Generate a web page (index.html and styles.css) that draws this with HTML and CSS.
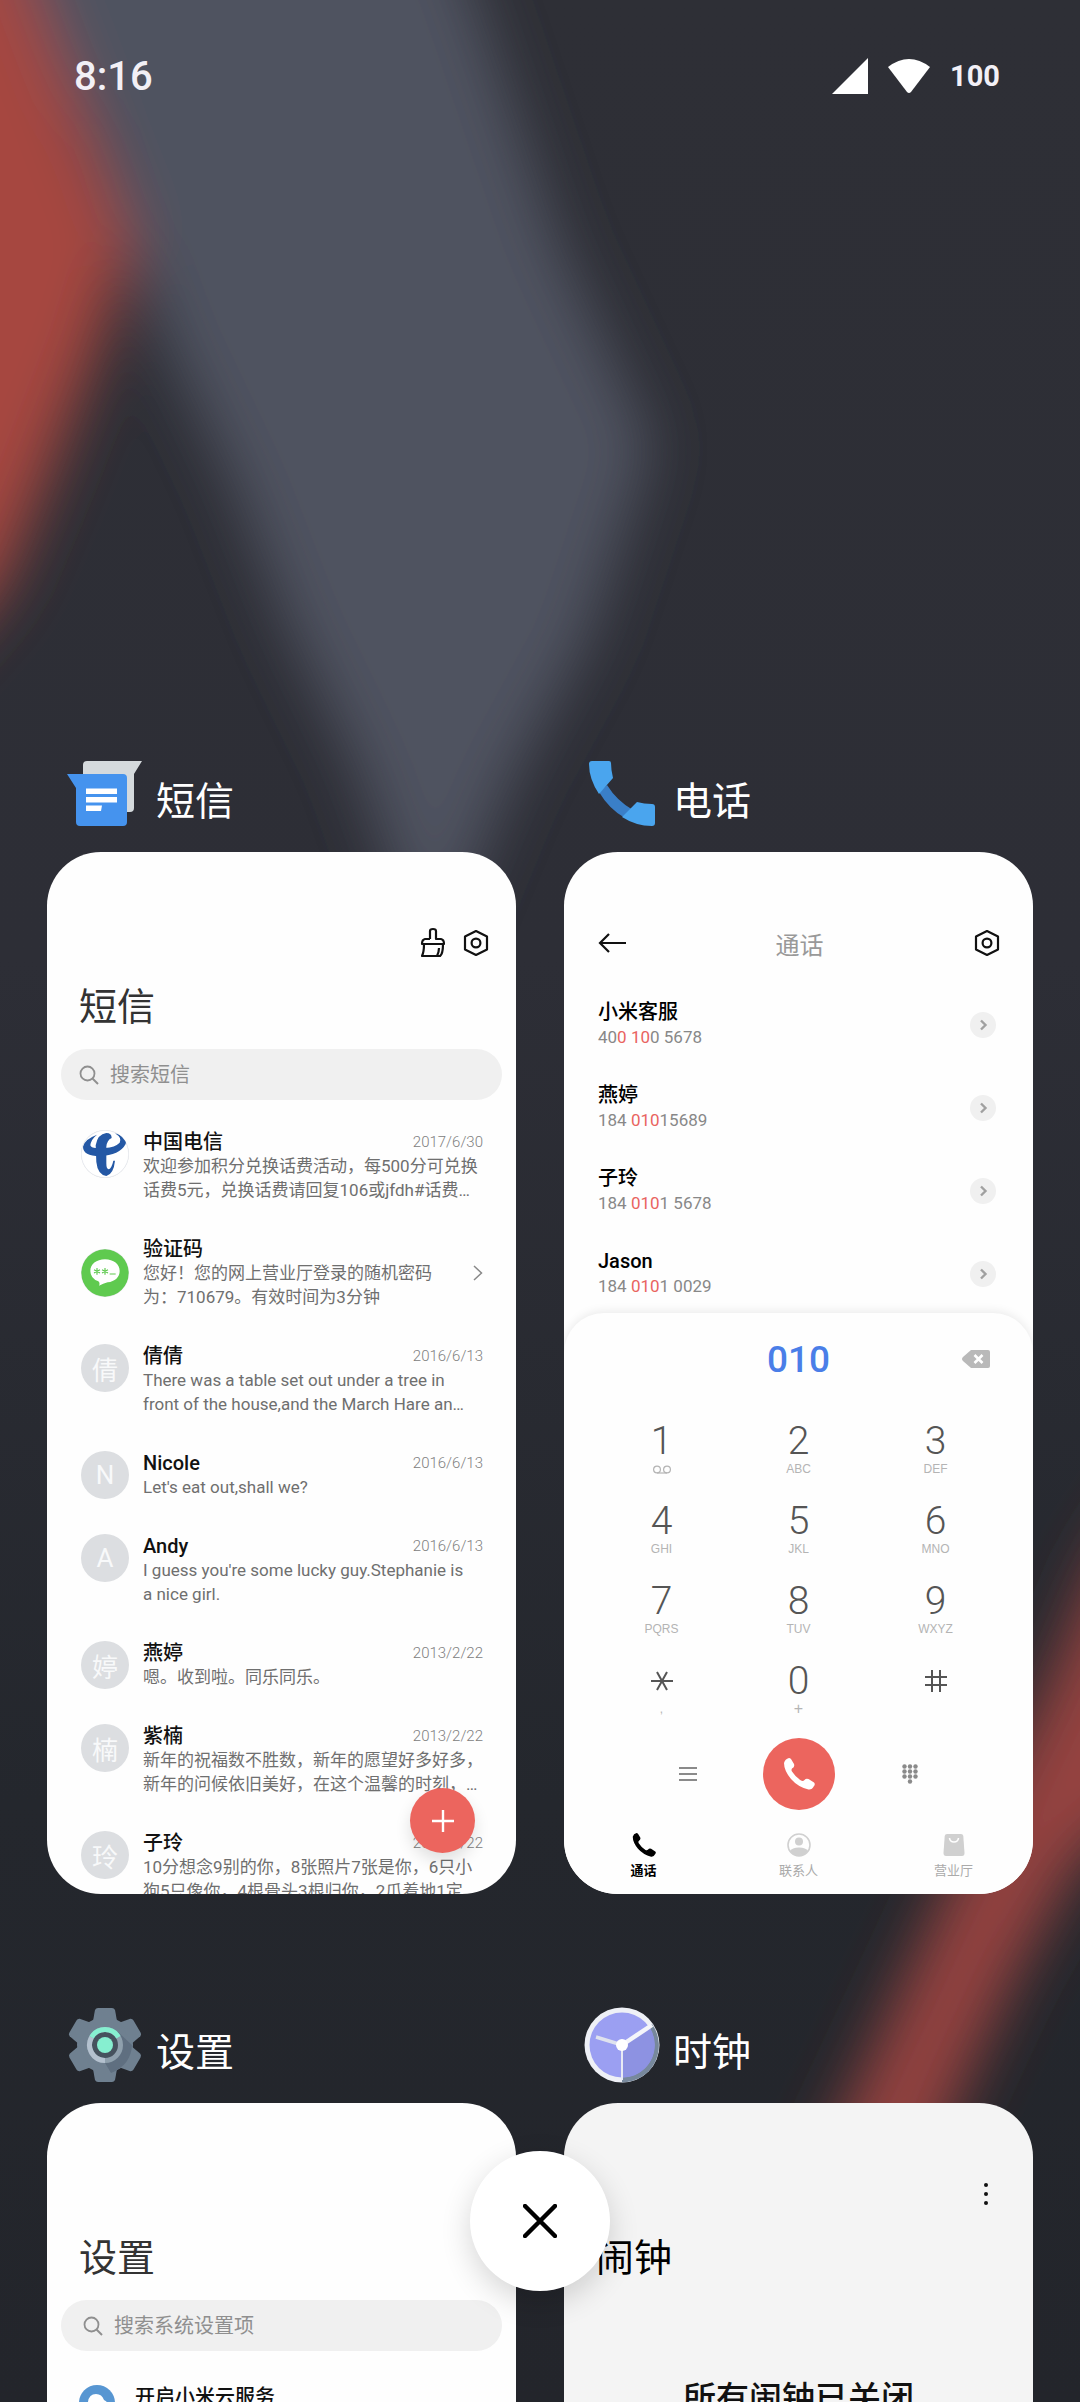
FILE: index.html
```html
<!DOCTYPE html>
<html lang="zh-CN">
<head>
<meta charset="utf-8">
<meta name="viewport" content="width=device-width, initial-scale=1">
<title>最近任务</title>
<link rel="stylesheet" href="styles.css">
</head>
<body>
<svg width="0" height="0" class="defs" aria-hidden="true">
  <symbol id="hex" viewBox="0 0 28 28"><path d="M14 2 L25 7.5 V20.5 L14 26 L3 20.5 V7.5 Z" fill="none" stroke="#111" stroke-width="2.2" stroke-linejoin="round"/><circle cx="14" cy="14" r="4.4" fill="none" stroke="#111" stroke-width="2.2"/></symbol>
  <symbol id="search" viewBox="0 0 20 20"><circle cx="8.5" cy="8.5" r="7" fill="none" stroke="#8f8f8f" stroke-width="1.8"/><path d="M13.5 13.5 L19 19" stroke="#8f8f8f" stroke-width="2"/></symbol>
  <symbol id="go" viewBox="0 0 26 26"><circle cx="13" cy="13" r="13" fill="#f0f0f0"/><path d="M11 8.5 L15.5 13 L11 17.5" fill="none" stroke="#a0a0a0" stroke-width="2.4"/></symbol>
  <symbol id="handset" viewBox="0 0 32 32"><path d="M1 5 Q2 1 6 0 Q7 0 8 1 L11 6 Q12 9 9 10.5 Q8 12 9 13.5 Q12.5 19 18 22.5 Q20 23.5 21.5 22 Q23 20 25.5 21 L31 24.5 Q32.5 26 31 28 Q29 32 25.5 31.5 Q15 29 8 21 Q1 12.5 1 5 Z"/></symbol>
</svg>
<div class="screen">
  <svg class="wallpaper" viewBox="0 0 1080 2402" preserveAspectRatio="none" aria-hidden="true">
    <defs>
      <linearGradient id="base" x1="0" y1="0" x2="0" y2="1"><stop offset="0" stop-color="#2e2f36"/><stop offset=".4" stop-color="#2d2e36"/><stop offset=".75" stop-color="#24272d"/><stop offset="1" stop-color="#23252b"/></linearGradient>
      <filter id="soft" x="-50%" y="-50%" width="200%" height="200%"><feGaussianBlur stdDeviation="30"/></filter>
    </defs>
    <rect width="1080" height="2402" fill="url(#base)"/>
    <g filter="url(#soft)">
      <path d="M-60 -120 H430 L476 0 L558 242 L652 445 L588 640 L512 780 L430 980 L358 770 L290 630 L234 485 L165 340 L90 130 Z" fill="#4f5361"/>
      <path d="M-150 -100 H0 L34 0 L128 245 L100 340 L44 485 L0 590 L-150 760 Z" fill="#a64740"/>
      <path d="M1180 1440 L1100 1560 L1045 1690 L945 1893 L848 2103 L730 2350 L860 2350 L955 2103 L1012 1980 L1080 1860 L1180 1780 Z" fill="#944240"/>
    </g>
  </svg>

  <header class="status">
    <span class="clock">8:16</span>
    <span class="signals">
      <svg width="36" height="36" viewBox="0 0 36 36" aria-hidden="true"><path d="M0 36 L36 0 V36 Z" fill="#fff"/></svg>
      <svg width="42" height="34" viewBox="0 0 42 34" aria-hidden="true"><path d="M0 8 Q21 -8 42 8 L23 33 Q21 35 19 33 Z" fill="#fff"/></svg>
      <span class="battery">100</span>
    </span>
  </header>

  <main class="recents">
    <section class="task">
      <h2 class="task-head">
        <svg width="76" height="76" viewBox="0 0 76 76" aria-hidden="true"><path d="M16 9 Q16 5 20 5 H75 L67 18 V52 Q67 56 63 56 H16 Z" fill="#d5dadd"/><path d="M0 18 H56 Q60 18 60 22 V66 Q60 70 56 70 H13 Q9 70 9 66 V32 Z" fill="#4593ee"/><path d="M19 32.5 H50 V38 H19 Z M19 41 H50 V46.5 H19 Z M19 49.5 H35 L34 55 H19 Z" fill="#fff"/></svg>
        <span>短信</span>
      </h2>
      <article class="card">
        <div class="bar bar-end">
          <button class="icon" aria-label="清理"><svg width="28" height="32" viewBox="0 0 28 32"><path d="M11 12 V4 Q11 2 14 2 Q17 2 17 4 V12 H22 Q25 12.5 25 17 H3 Q3 12.5 6 12 H11 M5 17 Q5 25 3 29 H21 Q24 27 24 17 M18 29 Q20 25 20 21" fill="none" stroke="#111" stroke-width="2.2" stroke-linejoin="round"/></svg></button>
          <button class="icon" aria-label="设置"><svg width="28" height="28"><use href="#hex"/></svg></button>
        </div>
        <h3 class="title">短信</h3>
        <label class="search"><svg width="20" height="20"><use href="#search"/></svg><input type="search" placeholder="搜索短信" aria-label="搜索短信"></label>
        <ul class="messages">
          <li class="message">
            <svg class="avatar" viewBox="0 0 144 144" aria-hidden="true"><circle cx="72" cy="72" r="71" fill="#fff" stroke="#e6e9ee" stroke-width="2"/><path d="M48 14 Q10 28 6 50 Q6 78 56 78 Q116 76 134 42 Q140 20 102 10 Q124 24 116 38 Q102 52 72 54 Q30 58 28 46 Q30 28 48 14 Z" fill="#2458a5"/><path d="M92 24 Q92 9 76 9 Q50 12 44 46 L46 96 Q50 134 76 138 Q98 132 102 92 H97 Q92 116 82 118 Q76 116 76 100 V50 Q78 30 92 24 Z" fill="#2458a5"/></svg>
            <div class="body"><div class="line"><h4>中国电信</h4><time>2017/6/30</time></div><p>欢迎参加积分兑换话费活动，每500分可兑换<br>话费5元，兑换话费请回复106或jfdh#话费…</p></div>
          </li>
          <li class="message center">
            <svg class="avatar" viewBox="0 0 144 144" aria-hidden="true"><circle cx="72" cy="72" r="71" fill="#5fca4f"/><path d="M72 31 C98 31 116 46 116 66 C116 84 102 98 80 100 Q66 104 54 110 Q58 102 52 97 Q28 88 28 66 C28 46 46 31 72 31 Z" fill="#fff"/><path d="M48 57 V77 M39 62 L57 72 M57 62 L39 72 M72 57 V77 M63 62 L81 72 M81 62 L63 72 M86 75 H104" stroke="#5fca4f" stroke-width="3.5"/></svg>
            <div class="body"><h4>验证码</h4><p>您好！您的网上营业厅登录的随机密码<br>为：710679。有效时间为3分钟</p></div>
            <svg class="more" width="10" height="16" viewBox="0 0 10 16" aria-hidden="true"><path d="M1 1 L8.5 8 L1 15" fill="none" stroke="#888" stroke-width="1.5"/></svg>
          </li>
          <li class="message"><span class="avatar">倩</span><div class="body"><div class="line"><h4>倩倩</h4><time>2016/6/13</time></div><p>There was a table set out under a tree in<br>front of the house,and the March Hare an…</p></div></li>
          <li class="message"><span class="avatar">N</span><div class="body"><div class="line"><h4>Nicole</h4><time>2016/6/13</time></div><p>Let's eat out,shall we?</p></div></li>
          <li class="message"><span class="avatar">A</span><div class="body"><div class="line"><h4>Andy</h4><time>2016/6/13</time></div><p>I guess you're some lucky guy.Stephanie is<br>a nice girl.</p></div></li>
          <li class="message"><span class="avatar">婷</span><div class="body"><div class="line"><h4>燕婷</h4><time>2013/2/22</time></div><p>嗯。收到啦。同乐同乐。</p></div></li>
          <li class="message"><span class="avatar">楠</span><div class="body"><div class="line"><h4>紫楠</h4><time>2013/2/22</time></div><p>新年的祝福数不胜数，新年的愿望好多好多，<br>新年的问候依旧美好，在这个温馨的时刻，…</p></div></li>
          <li class="message"><span class="avatar">玲</span><div class="body"><div class="line"><h4>子玲</h4><time>2013/2/22</time></div><p>10分想念9别的你，8张照片7张是你，6只小<br>狗5只像你，4根骨头3根归你，2爪着地1定</p></div></li>
        </ul>
        <button class="fab" aria-label="新建短信"><svg width="22" height="22" viewBox="0 0 22 22"><path d="M11 0 V22 M0 11 H22" stroke="#fff" stroke-width="2.4"/></svg></button>
      </article>
    </section>

    <section class="task">
      <h2 class="task-head">
        <svg width="76" height="76" viewBox="0 0 76 76" aria-hidden="true"><path d="M15 36 Q25 53 41 62 L49 54 Q33 45 23 29 Z" fill="#3a7fc8"/><path d="M5 8 Q5 5 8 5 H25 Q27 5 27 7 Q27 14 29 22 L15 38 Q5 23 5 8 Z M38 61 L53 46 Q60 48 68 48 Q71 48 71 51 V67 Q71 70 68 70 Q52 70 38 61 Z" fill="#4aa5ee"/></svg>
        <span>电话</span>
      </h2>
      <article class="card">
        <div class="bar bar-dial">
          <button class="icon" aria-label="返回"><svg width="28" height="20" viewBox="0 0 28 20"><path d="M28 10 H2 M11 1 L2 10 L11 19" fill="none" stroke="#111" stroke-width="2.2"/></svg></button>
          <h3>通话</h3>
          <button class="icon" aria-label="设置"><svg width="28" height="28"><use href="#hex"/></svg></button>
        </div>
        <ul class="contacts">
          <li><div><h4>小米客服</h4><p>40<mark>0 10</mark>0 5678</p></div><svg width="26" height="26"><use href="#go"/></svg></li>
          <li><div><h4>燕婷</h4><p>184 <mark>010</mark>15689</p></div><svg width="26" height="26"><use href="#go"/></svg></li>
          <li><div><h4>子玲</h4><p>184 <mark>010</mark>1 5678</p></div><svg width="26" height="26"><use href="#go"/></svg></li>
          <li><div><h4>Jason</h4><p>184 <mark>010</mark>1 0029</p></div><svg width="26" height="26"><use href="#go"/></svg></li>
        </ul>
        <div class="sheet">
          <div class="entry">
            <output>010</output>
            <button class="icon" aria-label="删除"><svg width="28" height="20" viewBox="0 0 28 20"><path d="M9 1 H26 Q28 1 28 3 V17 Q28 19 26 19 H9 L1 12 Q-1 10 1 8 Z" fill="#b9b9b9"/><path d="M12.5 6 L20.5 14 M20.5 6 L12.5 14" stroke="#fff" stroke-width="2.6"/></svg></button>
          </div>
          <div class="keys">
            <button><b>1</b><small><svg width="18" height="9" viewBox="0 0 18 9" aria-hidden="true"><circle cx="4" cy="4.5" r="3.4" fill="none" stroke="#b4b4b4" stroke-width="1.2"/><circle cx="14" cy="4.5" r="3.4" fill="none" stroke="#b4b4b4" stroke-width="1.2"/><path d="M4 8 H14" stroke="#b4b4b4" stroke-width="1.2"/></svg></small></button>
            <button><b>2</b><small>ABC</small></button>
            <button><b>3</b><small>DEF</small></button>
            <button><b>4</b><small>GHI</small></button>
            <button><b>5</b><small>JKL</small></button>
            <button><b>6</b><small>MNO</small></button>
            <button><b>7</b><small>PQRS</small></button>
            <button><b>8</b><small>TUV</small></button>
            <button><b>9</b><small>WXYZ</small></button>
            <button aria-label="星号"><b><svg width="22" height="20" viewBox="0 0 22 20"><path d="M0 10 H22 M6 1 L16 19 M16 1 L6 19" stroke="#555" stroke-width="2"/></svg></b><small>,</small></button>
            <button><b>0</b><small class="plus">+</small></button>
            <button aria-label="井号"><b><svg width="22" height="22" viewBox="0 0 22 22"><path d="M0 7 H22 M0 15 H22 M7 0 V22 M15 0 V22" stroke="#555" stroke-width="2"/></svg></b><small></small></button>
          </div>
          <div class="actions">
            <button class="icon" aria-label="菜单"><svg width="18" height="16" viewBox="0 0 18 16"><path d="M0 2 H18 M0 8 H18 M0 14 H18" stroke="#8a8a8a" stroke-width="2.2"/></svg></button>
            <button class="call" aria-label="呼叫"><svg width="32" height="32" fill="#fff"><use href="#handset"/></svg></button>
            <button class="icon" aria-label="拨号盘"><svg width="18" height="20" viewBox="0 0 18 20" fill="#8a8a8a"><circle cx="3.5" cy="2.5" r="2.2"/><circle cx="9" cy="2.5" r="2.2"/><circle cx="14.5" cy="2.5" r="2.2"/><circle cx="3.5" cy="7.5" r="2.2"/><circle cx="9" cy="7.5" r="2.2"/><circle cx="14.5" cy="7.5" r="2.2"/><circle cx="3.5" cy="12.5" r="2.2"/><circle cx="9" cy="12.5" r="2.2"/><circle cx="14.5" cy="12.5" r="2.2"/><circle cx="9" cy="17.5" r="2.2"/></svg></button>
          </div>
          <nav class="tabs">
            <a href="#calls" class="on"><svg width="24" height="24"><use href="#handset"/></svg>通话</a>
            <a href="#people"><svg width="24" height="24" viewBox="0 0 24 24"><circle cx="12" cy="12" r="11" fill="none" stroke="#d0d0d0" stroke-width="1.6"/><circle cx="12" cy="8.5" r="4" fill="#d0d0d0"/><path d="M3 18 Q5 14.5 12 14.5 Q19 14.5 21 18 Q17 23 12 23 Q7 23 3 18 Z" fill="#d0d0d0"/></svg>联系人</a>
            <a href="#store"><svg width="24" height="24" viewBox="0 0 24 24"><path d="M5 1 H19 Q21 1 21.3 3 L22.500 20 Q22.500 23 20 23 H4 Q1.500 23 1.500 20 L2.7 3 Q3 1 5 1 Z" fill="#d0d0d0"/><path d="M7.5 5 Q8 9 12 9 Q16 9 16.5 5" fill="none" stroke="#fff" stroke-width="1.6"/></svg>营业厅</a>
          </nav>
        </div>
      </article>
    </section>

    <section class="task">
      <h2 class="task-head">
        <svg width="76" height="76" viewBox="-38 -38 76 76" aria-hidden="true"><g fill="#6f8090"><circle r="28"/><path id="tooth" d="M-12 -24 L-10 -35 Q-9 -37 -7 -37 H7 Q9 -37 10 -35 L12 -24 Z"/><use href="#tooth" transform="rotate(60)"/><use href="#tooth" transform="rotate(120)"/><use href="#tooth" transform="rotate(180)"/><use href="#tooth" transform="rotate(240)"/><use href="#tooth" transform="rotate(300)"/></g><path d="M13 -13 L27 0 Q26 20 6 28 L0 18 Z" fill="#5f6f80"/><circle r="15.5" fill="#46525e" stroke="#8fa0ad" stroke-width="5"/><path d="M-13.4 -7.7 A15.5 15.5 0 0 0 0 15.5" fill="none" stroke="#b4c1cf" stroke-width="5"/><path d="M-13.4 -7.7 A15.5 15.5 0 0 1 13.4 -7.7" fill="none" stroke="#86efd0" stroke-width="5"/><circle r="8" fill="#86efd0"/></svg>
        <span>设置</span>
      </h2>
      <article class="card">
        <div class="bar"></div>
        <h3 class="title">设置</h3>
        <label class="search search-wide"><svg width="20" height="20"><use href="#search"/></svg><input type="search" placeholder="搜索系统设置项" aria-label="搜索系统设置项"></label>
        <ul class="settings">
          <li><svg width="36" height="36" viewBox="0 0 36 36" aria-hidden="true"><circle cx="18" cy="18" r="18" fill="#5796d2"/><path d="M9 25 Q5 21 9 17 Q10 9 17 9 Q23 9 25 15 Q30 17 28 22 Q27 25 24 25 Z" fill="#fff"/></svg>开启小米云服务</li>
        </ul>
      </article>
    </section>

    <section class="task">
      <h2 class="task-head">
        <svg width="76" height="76" viewBox="-38 -38 76 76" aria-hidden="true"><circle r="37.5" fill="#eef0f6"/><path d="M30 -21 A37 37 0 0 1 0 37.5 V0 Z" fill="#77889c"/><circle r="32.5" fill="#9b9ff2"/><path d="M0 0 L28 -17 A32.5 32.5 0 0 1 0 32.5 Z" fill="#8d92e2"/><path d="M0 0 L30 -20" stroke="#f4f5fa" stroke-width="4.5"/><path d="M0 0 L-26 -8" stroke="#dfe2ee" stroke-width="3.5"/><path d="M0 0 V35" stroke="#e8eaf4" stroke-width="2"/><circle r="6" fill="#fff"/></svg>
        <span>时钟</span>
      </h2>
      <article class="card card-grey">
        <div class="bar bar-end">
          <button class="icon" aria-label="更多"><svg width="28" height="24" viewBox="0 0 28 24" fill="#111"><circle cx="7" cy="3" r="2"/><circle cx="7" cy="12" r="2"/><circle cx="7" cy="21" r="2"/></svg></button>
        </div>
        <h3 class="title title-dark">闹钟</h3>
        <p class="alarm">所有闹钟已关闭</p>
      </article>
    </section>
  </main>

  <button class="close" aria-label="关闭全部"><svg width="34" height="34" viewBox="0 0 34 34"><path d="M2 2 L32 32 M32 2 L2 32" stroke="#000" stroke-width="4.5" stroke-linecap="round"/></svg></button>
</div>
</body>
</html>
```

FILE: styles.css
```css
* { box-sizing: border-box; margin: 0; padding: 0; }
body { font-family: Roboto, "Noto Sans CJK SC", sans-serif; color: #111; background: #24262c; }
button { border: 0; background: none; font: inherit; color: inherit; cursor: pointer; }
ul { list-style: none; }
svg { display: block; flex: none; }
.defs { position: absolute; }

.screen { position: relative; height: 100vh; overflow: hidden; }
.wallpaper { position: absolute; inset: 0; width: 100%; height: 100%; }

.status { position: relative; display: flex; align-items: center; justify-content: space-between; height: 152px; padding: 0 80px 0 74px; color: #f2f0f6; }
.clock { font-size: 40px; font-weight: 500; }
.signals { display: flex; align-items: center; gap: 20px; }
.battery { font-size: 29px; font-weight: 700; }

.recents { position: relative; display: grid; grid-template-columns: repeat(2, minmax(0, 1fr)); column-gap: 48px; row-gap: 113px; padding: 604px 47px 0; }
.task-head { display: flex; align-items: flex-end; gap: 13px; height: 96px; padding: 0 20px 20px; color: #fff; font-size: 39px; font-weight: 400; line-height: 60px; }
.card { position: relative; display: flex; flex-direction: column; aspect-ratio: 9 / 20; padding-top: 67px; border-radius: 54px; background: #fefefe; overflow: hidden; }
.card-grey { background: #f4f4f4; }

.bar { display: flex; align-items: center; height: 48px; padding: 0 26px 0 34px; flex: none; }
.bar-end { justify-content: flex-end; gap: 15px; }
.bar-dial { justify-content: space-between; padding: 0 32px 0 34px; }
.bar-dial h3 { font-size: 24px; font-weight: 400; color: #999; }
.icon { display: flex; align-items: center; justify-content: center; }
.title { margin: 16px 32px 0; font-size: 38px; font-weight: 400; line-height: 48px; color: #333; }
.title-dark { color: #000; }

.search { display: flex; align-items: center; gap: 11px; height: 51px; margin: 18px 14px 0; padding: 0 18px; border-radius: 26px; background: #f0f0f0; flex: none; }
.search-wide { padding: 0 22px; }
.search input { flex: 1; min-width: 0; border: 0; outline: 0; background: none; font: inherit; font-size: 20px; }
.search input::placeholder { color: #8f8f8f; opacity: 1; }

.messages { display: grid; gap: 35px; margin: 30px 34px 0; }
.message { display: flex; gap: 14px; }
.message.center { align-items: center; }
.avatar { display: flex; align-items: center; justify-content: center; flex: none; width: 48px; height: 48px; border-radius: 24px; background: #dcdee1; color: #f8f9fa; font-size: 26px; }
.body { flex: 1; min-width: 0; }
.line { display: flex; align-items: center; justify-content: space-between; }
h4 { font-size: 20px; font-weight: 500; line-height: 24px; }
time { font-size: 15px; font-weight: 300; line-height: 24px; color: #808080; }
.body p { font-size: 17px; line-height: 24px; color: #6f6f6f; white-space: nowrap; }
.fab { position: absolute; right: 41px; bottom: 41px; display: flex; align-items: center; justify-content: center; width: 65px; height: 65px; border-radius: 50%; background: #ec655e; box-shadow: 0 8px 16px rgba(0, 0, 0, .12); }

.contacts { display: grid; gap: 33px; margin: 33px 37px 0 34px; }
.contacts li { display: flex; align-items: center; justify-content: space-between; }
.contacts h4 { color: #000; }
.contacts p { font-size: 17px; line-height: 26px; color: #888; }
mark { background: none; color: #e9635f; }

.sheet { position: absolute; inset: auto 0 0; border-radius: 40px 40px 0 0; background: #fefefe; box-shadow: 0 -2px 10px rgba(0, 0, 0, .08); }
.entry { display: grid; grid-template-columns: 1fr auto 1fr; align-items: center; height: 92px; padding: 0 43px; }
.entry output { grid-column: 2; font-size: 37px; font-weight: 500; color: #4a7ee8; }
.entry .icon { justify-self: end; }
.keys { display: grid; grid-template-columns: repeat(3, 1fr); padding: 0 29px; }
.keys button { display: flex; flex-direction: column; align-items: center; height: 80px; padding-top: 14px; }
.keys b { display: flex; align-items: center; height: 44px; font-size: 39px; font-weight: 300; color: #555; }
.keys small { display: flex; align-items: center; height: 12px; font-family: "Liberation Sans", sans-serif; font-size: 12px; color: #b4b4b4; }
.keys .plus { font-size: 16px; }
.actions { display: grid; grid-template-columns: 1fr 72px 1fr; align-items: center; gap: 66px; padding: 13px 32px 0; }
.actions .icon:first-child { justify-self: end; }
.actions .icon:last-child { justify-self: start; }
.call { display: flex; align-items: center; justify-content: center; height: 72px; border-radius: 50%; background: #ec655e; }
.tabs { display: grid; grid-template-columns: repeat(3, 1fr); padding: 23px 2px 15px; }
.tabs a { display: flex; flex-direction: column; align-items: center; gap: 6px; font-size: 13px; line-height: 16px; color: #aaa; text-decoration: none; }
.tabs .on { color: #000; font-weight: 700; }

.settings { margin: 34px 32px 0; }
.settings li { display: flex; gap: 20px; font-size: 20px; font-weight: 500; line-height: 24px; }
.alarm { margin-top: 93px; text-align: center; font-size: 33px; font-weight: 500; line-height: 48px; color: #111; }

.close { position: absolute; left: 50%; bottom: 111px; display: flex; align-items: center; justify-content: center; width: 140px; height: 140px; margin-left: -70px; border-radius: 50%; background: #fff; box-shadow: 0 10px 30px rgba(0, 0, 0, .16); }
```
